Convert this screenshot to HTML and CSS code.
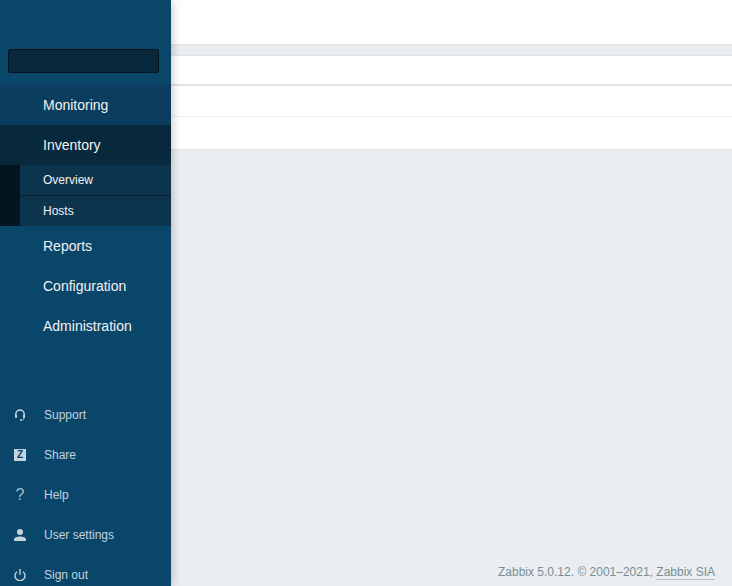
FILE: index.html
```html
<!DOCTYPE html>
<html lang="en">
<head>
<meta charset="utf-8">
<title>Zabbix</title>
<link rel="stylesheet" href="styles.css">
</head>
<body>
<div class="page">
  <aside class="sidebar">
    <div class="search-wrap"><div class="search"></div></div>
    <nav class="menu">
      <a class="item item-first">Monitoring</a>
      <a class="item item-open">Inventory</a>
      <div class="sub">
        <a class="sub-item">Overview</a>
        <a class="sub-item sub-last">Hosts</a>
      </div>
      <a class="item">Reports</a>
      <a class="item">Configuration</a>
      <a class="item">Administration</a>
    </nav>
    <nav class="user">
      <a class="user-item">
        <svg class="icon" viewBox="0 0 12 12"><path d="M1.800 7V5.200a4.200 4.200 0 0 1 8.400 0V7" fill="none" stroke="currentColor" stroke-width="1.400"/><rect x="1" y="5.500" width="2" height="3.500" rx=".8" fill="currentColor"/><rect x="9" y="5.500" width="2" height="3.500" rx=".8" fill="currentColor"/><path d="M10 8.800c0 1.500-1 2.300-3 2.300" fill="none" stroke="currentColor" stroke-width=".9"/><circle cx="6.800" cy="11.100" r=".9" fill="currentColor"/></svg>
        <span>Support</span>
      </a>
      <a class="user-item">
        <span class="icon zicon">Z</span>
        <span>Share</span>
      </a>
      <a class="user-item">
        <span class="icon qicon">?</span>
        <span>Help</span>
      </a>
      <a class="user-item">
        <svg class="icon" viewBox="0 0 12 12"><circle cx="6" cy="3" r="3" fill="currentColor"/><path d="M0 12v-1.400C0 8.400 2.700 7.400 6 7.400s6 1 6 3.200V12z" fill="currentColor"/></svg>
        <span>User settings</span>
      </a>
      <a class="user-item">
        <svg class="icon" viewBox="0 0 12 12"><path d="M3 2.700a5 5 0 1 0 6 0" fill="none" stroke="currentColor" stroke-width="1.400"/><path d="M6 0v5.800" fill="none" stroke="currentColor" stroke-width="1.400"/></svg>
        <span>Sign out</span>
      </a>
    </nav>
  </aside>
  <main class="main">
    <div class="header"></div>
    <div class="band"></div>
    <div class="table">
      <div class="row row-head"></div>
      <div class="row row-a"></div>
      <div class="row row-b"></div>
    </div>
    <footer class="footer">Zabbix 5.0.12. © 2001–2021, <a class="footer-link">Zabbix SIA</a></footer>
  </main>
</div>
</body>
</html>
```

FILE: styles.css
```css
* { box-sizing: border-box; }
html, body { margin: 0; height: 100%; overflow: hidden; }
body { font-family: "Liberation Sans", Arial, sans-serif; background: #ebeef0; }
.page { display: flex; height: 586px; overflow: hidden; }

.sidebar {
  position: relative;
  z-index: 1;
  flex: 0 0 171px;
  display: flex;
  flex-direction: column;
  background: #0a466a;
  box-shadow: 0 0 10px rgba(0, 0, 0, .28);
}
.search-wrap { padding: 49px 12px 12px 8px; }
.search {
  height: 24px;
  background: #08293c;
  border: 1px solid #04131c;
  border-radius: 2px;
}
.menu { flex: 1; display: flex; flex-direction: column; }
.item {
  height: 40px;
  display: flex;
  align-items: center;
  padding-left: 43px;
  font-size: 14px;
  color: #f2f2f2;
}
.item-first { background: #0b3e5e; }
.item-open { background: #08293c; }
.sub {
  background: #0d344d;
  border-left: 20px solid #04151f;
}
.sub-item {
  height: 31px;
  display: flex;
  align-items: center;
  padding-left: 23px;
  font-size: 12px;
  color: #f2f2f2;
  border-bottom: 1px solid #06202f;
}
.sub-last { height: 30px; border-bottom: 0; }
.user { margin-bottom: -9px; display: flex; flex-direction: column; }
.user-item {
  height: 40px;
  display: flex;
  align-items: center;
  gap: 18px;
  padding-left: 14px;
  font-size: 12px;
  color: #c4d3dc;
}
.icon { width: 12px; height: 12px; flex: none; color: #c4d3dc; }
.zicon {
  display: flex;
  align-items: center;
  justify-content: center;
  background: #c4d3dc;
  color: #0a466a;
  font-size: 10px;
  font-weight: 700;
  line-height: 1;
}
.qicon { font-size: 16px; line-height: 11px; text-align: center; color: #a9bfcc; }

.main { flex: 1; min-width: 0; display: flex; flex-direction: column; }
.header { height: 45px; background: #fff; border-bottom: 1px solid #dfe4e7; }
.band { height: 10px; background: #ebeef0; }
.table { background: #fff; border-top: 1px solid #dfe4e7; border-bottom: 1px solid #dfe4e7; }
.row-head { height: 31px; border-bottom: 2px solid #dfe4e7; margin-top: -1px; border-top: 1px solid #dfe4e7; }
.row-a { height: 31px; border-bottom: 1px solid #ebeef0; }
.row-b { height: 32px; }
.footer {
  margin-top: auto;
  padding: 0 17px 7px 0;
  text-align: right;
  font-size: 12px;
  line-height: 14px;
  color: #768d99;
}
.footer-link { border-bottom: 1px solid #b5c2ca; }
```
